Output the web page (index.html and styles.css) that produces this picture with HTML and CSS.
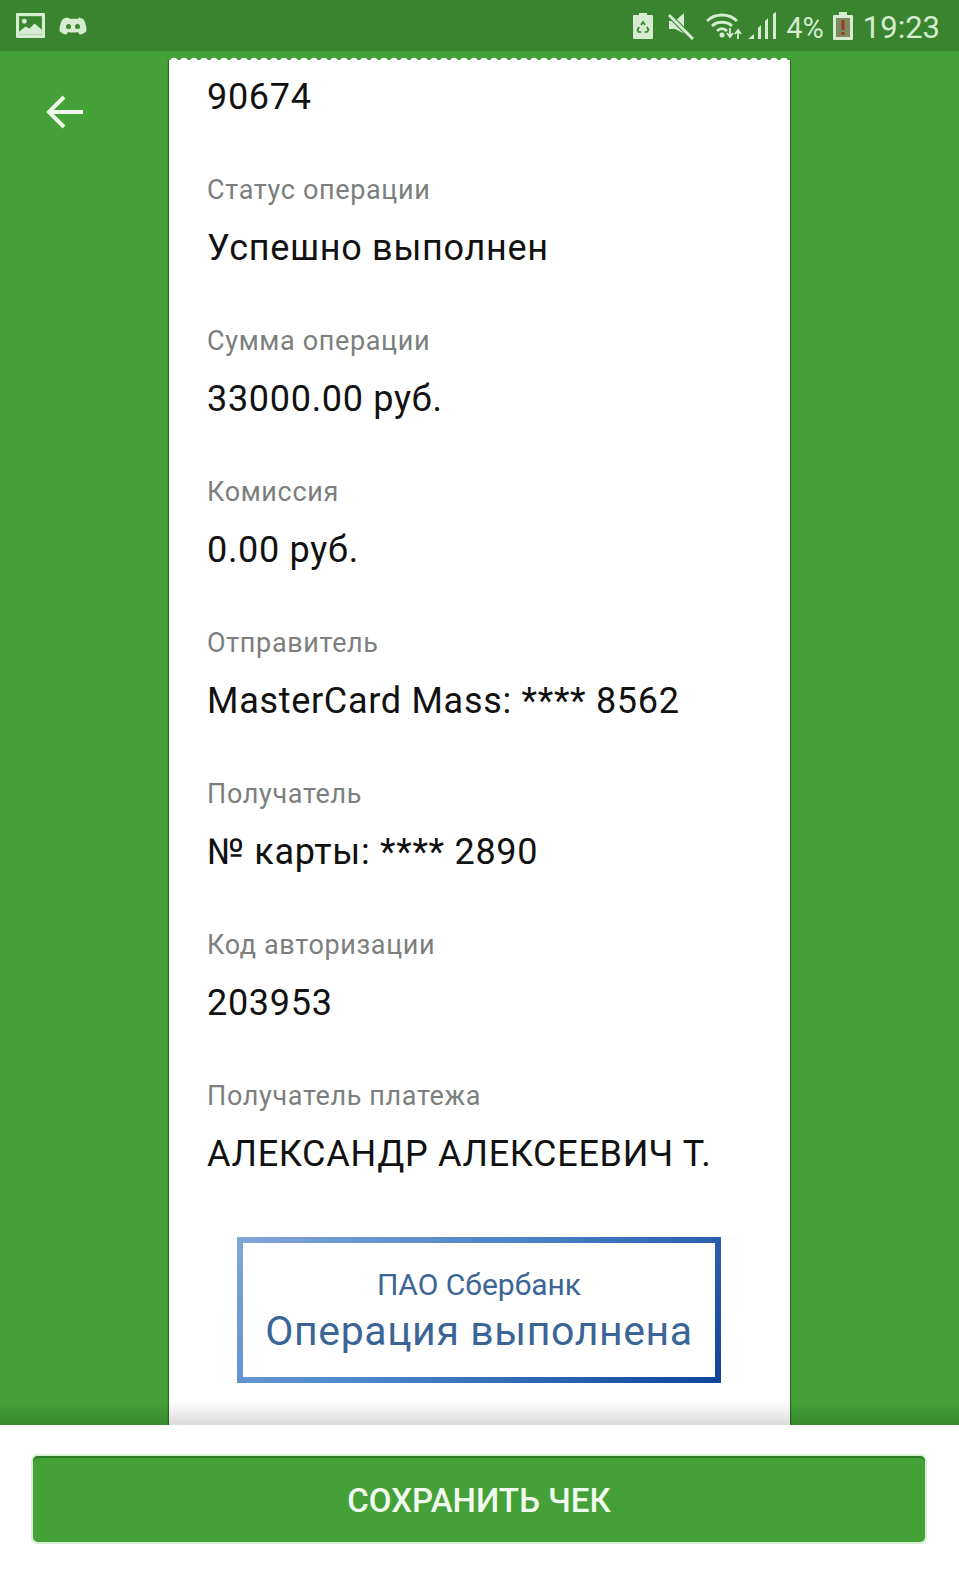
FILE: index.html
```html
<!DOCTYPE html>
<html lang="ru">
<head>
<meta charset="utf-8">
<title>Чек</title>
<link rel="stylesheet" href="styles.css">
</head>
<body>
<div class="phone">
  <header class="status">
    <div class="status-left">
      <svg class="ic-pic" viewBox="0 0 28 24"><rect x="0" y="0" width="28" height="24" rx="1" fill="#d5ecd0"/><rect x="3" y="3" width="22" height="18" fill="#3a8430"/><circle cx="8" cy="8" r="2.4" fill="#d5ecd0"/><path d="M3 18l6-5 4 2 5-5 7 6v5H3z" fill="#d5ecd0"/></svg>
      <svg class="ic-discord" viewBox="0 0 28 20"><path d="M8 1.500C5.500 2 4 3 3 4 1.500 7 .500 10 .500 15c2 2.500 5 3.500 7 3.500l1.500-2.500c2.500.7 7.500.7 10 0l1.500 2.500c2 0 5-1 7-3.500 0-5-1-8-2.500-11-1-1-2.500-2-5-2.500l-1 1.500c-2-.4-5-.4-7 0z" fill="#d5ecd0"/><circle cx="9.500" cy="10.500" r="2.500" fill="#3a8430"/><circle cx="18.500" cy="10.500" r="2.500" fill="#3a8430"/></svg>
    </div>
    <div class="status-right">
      <svg class="ic-saver" viewBox="0 0 20 26"><path d="M6 0h8v2h5a1 1 0 0 1 1 1v22a1 1 0 0 1-1 1H1a1 1 0 0 1-1-1V3a1 1 0 0 1 1-1h5z" fill="#d5ecd0"/><path d="M8 12l2-3 2 3M14 14l1.500 3-1.500 2h-2.500M8.500 19H5.500l-1-2 1.500-3" stroke="#3a8430" stroke-width="1.700" fill="none"/></svg>
      <svg class="ic-mute" viewBox="0 0 28 28"><path d="M2 9h6l9-8v20.500L8 17H2z" fill="#d5ecd0"/><path d="M2 3l24 24" stroke="#3a8430" stroke-width="5"/><path d="M2 3l24 24" stroke="#d5ecd0" stroke-width="3"/></svg>
      <svg class="ic-wifi" viewBox="0 0 38 28"><path d="M2 9c8-8 22-8 30 0M7 14c5-5 15-5 20 0M12 19c3-3 7-3 10 0" fill="none" stroke="#d5ecd0" stroke-width="2.800"/><circle cx="17" cy="23" r="2.500" fill="#d5ecd0"/><path d="M25 16v8M22 21l3 4 3-4M33 27v-8M30 22l3-4 3 4" fill="none" stroke="#d5ecd0" stroke-width="1.800"/></svg>
      <svg class="ic-signal" viewBox="0 0 29 28"><path d="M0 27l6-5v5zM10 27V16l3-3v14zM17 27V9l3-3v21zM25 27V2l3-2v27z" fill="#d5ecd0"/></svg>
      <span class="pct">4%</span>
      <svg class="ic-batt" viewBox="0 0 20 28"><path d="M6 0h8v3h5a1 1 0 0 1 1 1v23a1 1 0 0 1-1 1H1a1 1 0 0 1-1-1V4a1 1 0 0 1 1-1h5z" fill="#d5ecd0"/><rect x="3" y="6" width="14" height="19" fill="#7d8a5f"/><rect x="8.500" y="8" width="3" height="10" fill="#9c3a20"/><rect x="8.500" y="20" width="3" height="3" fill="#9c3a20"/></svg>
      <span class="time">19:23</span>
    </div>
  </header>

  <main class="content">
    <div class="nav">
      <svg class="ic-back" viewBox="0 0 38 34"><path d="M37 17H3M18 2L3 17l15 15" fill="none" stroke="#eef7ea" stroke-width="4"/></svg>
    </div>
    <section class="receipt">
      <p class="value first">90674</p>
      <p class="label">Статус операции</p>
      <p class="value">Успешно выполнен</p>
      <p class="label">Сумма операции</p>
      <p class="value">33000.00 руб.</p>
      <p class="label">Комиссия</p>
      <p class="value">0.00 руб.</p>
      <p class="label">Отправитель</p>
      <p class="value">MasterCard Mass: **** 8562</p>
      <p class="label">Получатель</p>
      <p class="value">№ карты: **** 2890</p>
      <p class="label">Код авторизации</p>
      <p class="value">203953</p>
      <p class="label">Получатель платежа</p>
      <p class="value">АЛЕКСАНДР АЛЕКСЕЕВИЧ Т.</p>
      <div class="stamp">
        <span class="stamp-bank">ПАО Сбербанк</span>
        <span class="stamp-text">Операция выполнена</span>
      </div>
    </section>
    <div class="fade"></div>
  </main>

  <footer class="bottom">
    <button class="save">СОХРАНИТЬ ЧЕК</button>
  </footer>
</div>
</body>
</html>
```

FILE: styles.css
```css
* { box-sizing: border-box; }
html, body { margin: 0; padding: 0; }
body { background: #fff; font-family: Roboto, "Liberation Sans", sans-serif; }
.phone { width: 959px; height: 1573px; display: flex; flex-direction: column; overflow: hidden; }

.status { height: 51px; flex: none; background: #3a8430; display: flex; justify-content: space-between; align-items: center; padding: 0 19px 0 16px; color: #d5ecd0; }
.status-left, .status-right { display: flex; align-items: center; }
.status-left { gap: 14px; }
.ic-pic { width: 29px; height: 25px; }
.ic-discord { width: 28px; height: 20px; }
.status-right { height: 30px; padding-top: 1px; }
.ic-saver { width: 20px; height: 26px; margin-right: 14px; }
.ic-mute { width: 28px; height: 28px; margin-right: 10px; }
.ic-wifi { width: 38px; height: 28px; margin-right: 5px; }
.ic-signal { width: 29px; height: 28px; margin-right: 9px; }
.pct { font-size: 29px; margin: 3px 9px 0 0; }
.ic-batt { width: 20px; height: 28px; margin-right: 10px; }
.time { font-size: 31px; margin-top: 3px; }

.content { flex: 1; min-height: 0; background: #43a137; position: relative; display: flex; overflow: hidden; padding-top: 9px; }
.nav { width: 169px; flex: none; padding: 35px 0 0 46px; }
.ic-back { width: 38px; height: 34px; display: block; }

.receipt { width: 621px; flex: none; background: #fff; padding: 17px 0 0 38px; position: relative; box-shadow: -1px 0 1px #2c6d24, 1px 0 1px #2c6d24; }
.receipt::before { content: ""; position: absolute; left: 0; right: 0; top: -3px; height: 4px; background: radial-gradient(circle at 5px 5px, #fff 4px, transparent 4.600px) 0 0 / 10px 4px repeat-x; }
.label { margin: 0; font-size: 27px; line-height: 30px; height: 30px; color: #7b7f7d; letter-spacing: .65px; }
.value { font-size: 36px; line-height: 40px; height: 40px; color: #111; letter-spacing: .7px; margin: 23px 0 58px; white-space: nowrap; }
.value.first { margin-top: 0; }

.stamp { width: 484px; height: 146px; margin: 63px 0 0 30px; border: 6px solid; border-image: linear-gradient(135deg, #7ea6d8, #4b84c8 45%, #0f4699) 1; background: #fff; display: flex; flex-direction: column; align-items: center; color: #3b6596; }
.stamp-bank { font-size: 30px; line-height: 30px; margin-top: 27px; }
.stamp-text { font-size: 41px; line-height: 44px; margin-top: 9px; letter-spacing: .6px; white-space: nowrap; }

.fade { position: absolute; left: 0; right: 0; bottom: 0; height: 24px; background: linear-gradient(to bottom, rgba(0,0,0,0), rgba(0,0,0,.14)); }

.bottom { height: 148px; flex: none; background: #fff; padding: 31px 33px 0 33px; }
.save { display: block; width: 892px; height: 86px; background: #43a137; border: 0; border-radius: 5px; color: #f1f8ee; font-family: "Roboto", sans-serif; font-size: 33px; font-weight: 500; box-shadow: 0 0 0 2px #d6efd0, inset 0 2px 0 #2f7d26; padding: 3px 0 0; }
```
